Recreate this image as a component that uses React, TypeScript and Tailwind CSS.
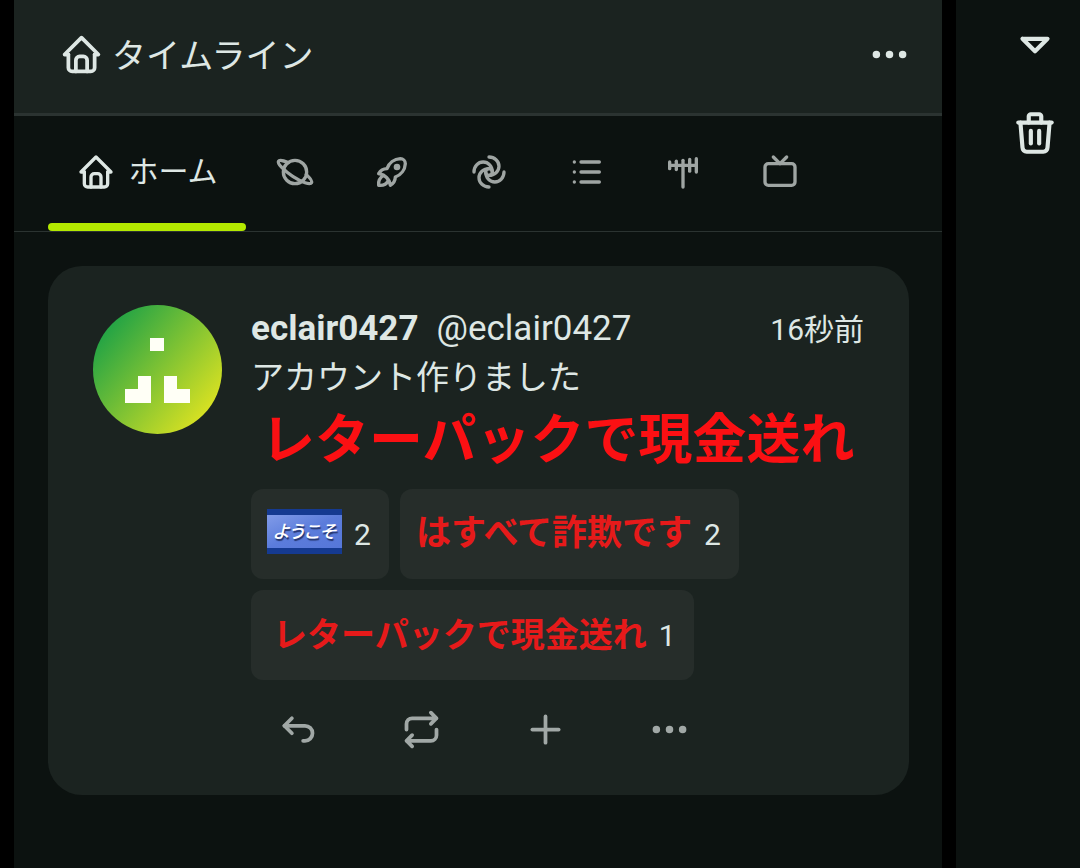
import type { ReactNode } from "react";
import type { IconType } from "react-icons";
import {
  TbAntenna,
  TbArrowBackUp,
  TbCaretDown,
  TbDeviceTv,
  TbDots,
  TbHome,
  TbList,
  TbPlanet,
  TbPlus,
  TbRepeat,
  TbRocket,
  TbTrash,
  TbWhirl,
} from "react-icons/tb";

const tabs: { label: string; icon: IconType }[] = [
  { label: "ローカル", icon: TbPlanet },
  { label: "ソーシャル", icon: TbRocket },
  { label: "グローバル", icon: TbWhirl },
  { label: "リスト", icon: TbList },
  { label: "アンテナ", icon: TbAntenna },
  { label: "チャンネル", icon: TbDeviceTv },
];

const actions: { label: string; icon: IconType }[] = [
  { label: "返信", icon: TbArrowBackUp },
  { label: "リノート", icon: TbRepeat },
  { label: "リアクション", icon: TbPlus },
  { label: "もっと", icon: TbDots },
];

function Avatar() {
  return (
    <svg viewBox="0 0 129 129" className="size-[129px] shrink-0 rounded-full" role="img" aria-label="eclair0427">
      <defs>
        <linearGradient id="avatar" x1="0.08" y1="0.2" x2="0.92" y2="0.9">
          <stop offset="0" stopColor="#22a345" />
          <stop offset="1" stopColor="#e4e520" />
        </linearGradient>
      </defs>
      <rect width="129" height="129" fill="url(#avatar)" />
      <path
        fill="#fffff6"
        d="M57 33h14v13H57zM45 71h13v27H32V84h13zM71 71h13v13h13v14H71z"
      />
    </svg>
  );
}

function Reaction({ count, children }: { count: number; children: ReactNode }) {
  return (
    <button className="flex h-[90px] items-center gap-3 rounded-xl bg-[#262d2a] pr-[18px] pl-4 text-[30px]">
      {children}
      <span>{count}</span>
    </button>
  );
}

function WelcomeEmoji() {
  return (
    <span className="mb-[5px] flex h-[45px] w-[75px] items-center justify-center border-y-[6px] border-[#153a91] bg-linear-to-br from-[#819be8] via-[#5b7cdb] to-[#5677d8] text-[18px] leading-none font-medium whitespace-nowrap text-white italic [font-feature-settings:'palt'] [text-shadow:1px_2px_1px_#22336b]">
      ようこそ
    </span>
  );
}

export default function App() {
  return (
    <div className="flex min-h-screen bg-black font-['Roboto','Noto_Sans_CJK_JP',sans-serif] text-[#dee7e4]">
      <main className="mx-[14px] min-w-0 flex-1 bg-[#0c1210]">
        <header className="flex h-[116px] items-center justify-between border-b-[3px] border-[#2b3331] bg-[#1b2320] pr-[30px] pb-1 pl-[45px]">
          <h1 className="flex items-center gap-2 text-[34px] font-normal">
            <TbHome className="size-[45px]" />
            <span className="pt-1">タイムライン</span>
          </h1>
          <button aria-label="メニュー">
            <TbDots className="size-[45px]" />
          </button>
        </header>

        <nav className="flex h-[116px] border-b border-[#2b3331] px-[34px]">
          <button className="flex w-[198px] flex-col text-[30px]">
            <span className="flex w-full flex-1 items-center justify-center gap-3 pt-1">
              <TbHome className="size-10" />
              ホーム
            </span>
            <span className="h-2 w-full rounded-full bg-[#b4e900]" />
          </button>
          {tabs.map(({ label, icon: Icon }) => (
            <button
              key={label}
              aria-label={label}
              className="flex w-[97px] items-center justify-center pb-1 text-[#9fa5a3]"
            >
              <Icon className="size-10" />
            </button>
          ))}
        </nav>

        <article className="mt-[34px] mr-[33px] ml-[34px] flex gap-[29px] rounded-[34px] bg-[#1b2320] px-[45px] pt-[39px] pb-[43px]">
          <Avatar />
          <div className="min-w-0 flex-1">
            <div className="flex items-baseline gap-[18px] text-[35px] leading-[48px]">
              <a href="#user" className="font-bold">
                eclair0427
              </a>
              <span>@eclair0427</span>
              <time className="ml-auto text-[30px] leading-none">16秒前</time>
            </div>
            <p className="text-[33px] leading-[50px]">アカウント作りました</p>
            <p className="pl-[10px] text-[54px] leading-[76px] font-bold whitespace-nowrap text-[#fb1013]">
              レターパックで現金送れ
            </p>

            <div className="mt-[10px] flex flex-wrap gap-[11px]">
              <Reaction count={2}>
                <WelcomeEmoji />
              </Reaction>
              <Reaction count={2}>
                <span className="text-[35px] font-bold text-[#e61a1a]">はすべて詐欺です</span>
              </Reaction>
              <Reaction count={1}>
                <span className="pl-[6px] text-[34px] font-bold text-[#e61a1a]">レターパックで現金送れ</span>
              </Reaction>
            </div>

            <div className="mt-[27px] flex gap-[79px] pl-6 text-[#a1a8a6]">
              {actions.map(({ label, icon: Icon }) => (
                <button key={label} aria-label={label}>
                  <Icon className="size-[45px]" />
                </button>
              ))}
            </div>
          </div>
        </article>
      </main>

      <aside className="flex w-[124px] flex-col items-start gap-10 bg-[#0c1210] pt-[18px] pl-[54px]">
        <button aria-label="開く">
          <TbCaretDown className="size-[50px]" />
        </button>
        <button aria-label="削除">
          <TbTrash className="size-[50px]" />
        </button>
      </aside>
    </div>
  );
}
